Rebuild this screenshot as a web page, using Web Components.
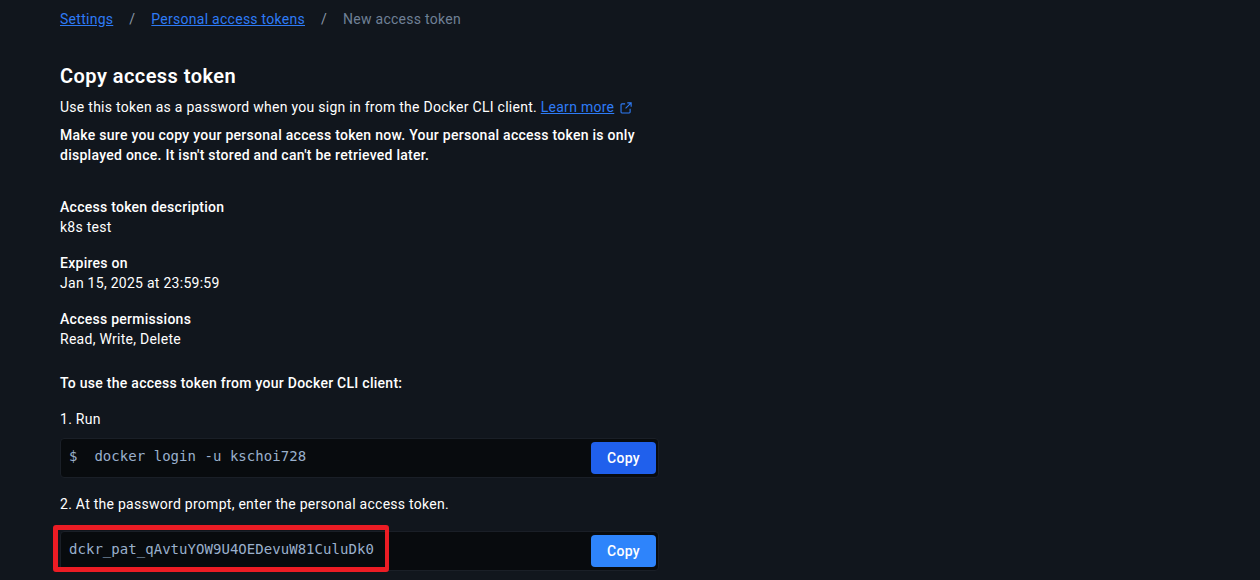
<!DOCTYPE html>
<html><head><meta charset="utf-8"><style>
html,body{margin:0;padding:0;background:#11161d;height:580px;overflow:hidden}
body{font:14px/20px Roboto,sans-serif;color:#fff;letter-spacing:.27px}
</style></head><body>
<token-page></token-page>
<template id="cb"><style>
:host{display:flex;align-items:center;justify-content:space-between;box-sizing:border-box;width:599px;height:40px;background:#080b0e;border:1px solid #1a1f27;border-radius:4px;padding:0 2px 0 8px}
code{font:14px/20px "DejaVu Sans Mono",monospace;color:#9ab0cc;white-space:pre;letter-spacing:.04px;position:relative;top:-2px}
button{all:unset;box-sizing:border-box;width:65px;height:32px;border-radius:4px;background:var(--btn,#2060ec);color:#fff;font:500 14px/32px Roboto,sans-serif;letter-spacing:.27px;text-align:center}
</style><code><slot></slot></code><button>Copy</button></template>
<template id="bc"><style>
:host{display:flex;height:38px;align-items:center;font:14px/20px Roboto,sans-serif;letter-spacing:.27px;color:#6f8096}
a{color:#2e7bf6;text-decoration:underline}
i{font-style:normal;color:#8b98a8;margin:0 16px}
</style><a>Settings</a><i>/</i><a>Personal access tokens</a><i>/</i><span>New access token</span></template>
<template id="fd"><style>
:host{display:block;margin-bottom:16px}
b{display:block;font-weight:500}
</style><b><slot name="k"></slot></b><slot></slot></template>
<script>
class Base extends HTMLElement{constructor(id){super();this.attachShadow({mode:'open'}).appendChild(document.getElementById(id).content.cloneNode(true))}}
customElements.define('code-box',class extends Base{constructor(){super('cb')}});
customElements.define('bread-crumb',class extends Base{constructor(){super('bc')}});
customElements.define('info-field',class extends Base{constructor(){super('fd')}});
customElements.define('token-page',class extends HTMLElement{constructor(){super();this.attachShadow({mode:'open'}).innerHTML=`<style>
:host{display:block;position:relative;height:580px;padding-left:60px;overflow:hidden}
h1{font:600 20px/28px Roboto,sans-serif;letter-spacing:.45px;margin:24px 0 7px}
p{margin:0 0 8px}
strong{font-weight:500}
a{color:#2e7bf6;text-decoration:underline}
svg{vertical-align:-2px;margin-left:2px}
.warn{margin-bottom:32px;width:600px}
.sub{margin:24px 0 16px;font-weight:500}
.step{margin:0 0 9px}
.step.two{margin-bottom:17px}
code-box{margin-bottom:16px}
.mark{position:absolute;left:53px;top:525px;width:336px;height:47px;box-sizing:border-box;border:5px solid #ec1c24;border-right-width:4px;border-radius:3px}
</style>
<bread-crumb></bread-crumb>
<h1>Copy access token</h1>
<p>Use this token as a password when you sign in from the Docker CLI client. <a>Learn more</a> <svg width="12" height="12" viewBox="0 0 14 14" fill="none" stroke="#2e7bf6" stroke-width="1.3"><path d="M6 2.2H2.2a1 1 0 0 0-1 1v8.6a1 1 0 0 0 1 1h8.6a1 1 0 0 0 1-1V8M8.5 1h4.5v4.5M13 1 6.5 7.5"/></svg></p>
<p class="warn"><strong>Make sure you copy your personal access token now. Your personal access token is only displayed once. It isn't stored and can't be retrieved later.</strong></p>
<info-field><span slot="k">Access token description</span>k8s test</info-field>
<info-field><span slot="k">Expires on</span>Jan 15, 2025 at 23:59:59</info-field>
<info-field><span slot="k">Access permissions</span>Read, Write, Delete</info-field>
<div class="sub">To use the access token from your Docker CLI client:</div>
<div class="step">1. Run</div>
<code-box>$  docker login -u kschoi728</code-box>
<div class="step two">2. At the password prompt, enter the personal access token.</div>
<code-box style="--btn:#2e84fb">dckr_pat_qAvtuYOW9U4OEDevuW81CuluDk0</code-box>
<div class="mark"></div>`}});
</script></body></html>
